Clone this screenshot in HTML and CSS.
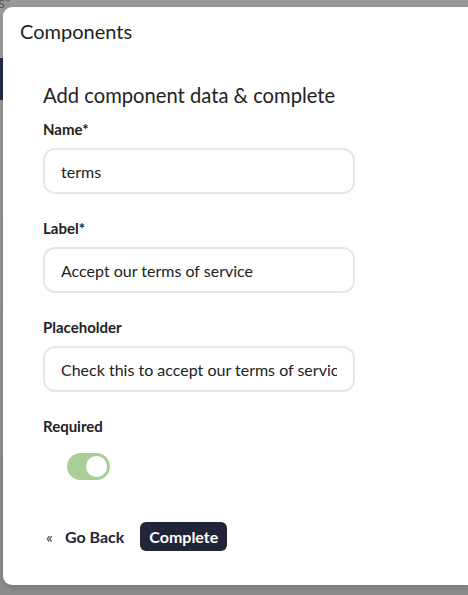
FILE: index.html
```html
<!DOCTYPE html>
<html>
<head>
<meta charset="utf-8">
<link rel="stylesheet" href="styles.css">
</head>
<body>
<div class="backdrop">
  <span class="behind-text">s*</span>
  <div class="modal">
    <h1 class="modal-title">Components</h1>
    <div class="modal-body">
      <h2 class="section-title">Add component data &amp; complete</h2>
      <div class="field">
        <label class="field-label">Name*</label>
        <input class="input" type="text" value="terms" readonly>
      </div>
      <div class="field">
        <label class="field-label">Label*</label>
        <input class="input" type="text" value="Accept our terms of service" readonly>
      </div>
      <div class="field">
        <label class="field-label">Placeholder</label>
        <input class="input" type="text" value="Check this to accept our terms of service" readonly>
      </div>
      <div class="field">
        <label class="field-label">Required</label>
        <div class="toggle"><span class="knob"></span></div>
      </div>
      <div class="actions">
        <button class="back-btn"><span class="chev">«</span>Go Back</button>
        <button class="complete-btn">Complete</button>
      </div>
    </div>
  </div>
</div>
</body>
</html>
```
FILE: styles.css
```css
* { box-sizing: border-box; }
html, body { margin: 0; padding: 0; }
body {
  width: 468px;
  height: 595px;
  overflow: hidden;
  font-family: Lato, "Noto Sans", sans-serif;
  background: #8c8c8c;
}
.backdrop {
  position: relative;
  width: 468px;
  height: 595px;
  padding: 7px 0 0 3px;
  background:
    linear-gradient(#9e9e9e, #9e9e9e) 0 0 / 3px 58px no-repeat,
    linear-gradient(#252a45, #252a45) 0 58px / 3px 42px no-repeat,
    linear-gradient(#999, #8a8a8a);
}
.behind-text {
  position: absolute;
  left: -2px;
  top: -8px;
  font-size: 16px;
  color: #555;
}
.modal {
  position: relative;
  background: #fff;
  height: 578px;
  border-radius: 9px 0 0 9px;
  box-shadow: 0 2px 6px rgba(0,0,0,0.15);
  color: #222;
}
.modal-title {
  margin: 0;
  padding: 12px 0 0 17px;
  font-size: 20px;
  font-weight: 400;
  line-height: 24px;
  color: #222;
}
.modal-body {
  padding: 0 0 0 40px;
}
.section-title {
  margin: 0;
  padding-top: 40px;
  font-size: 20.2px;
  font-weight: 400;
  line-height: 24px;
  color: #222;
}
.field {
  display: flex;
  flex-direction: column;
  margin-top: 13px;
}
.field + .field { margin-top: 25px; }
.field-label {
  font-size: 15px;
  font-weight: 700;
  line-height: 18px;
  color: #222;
  margin-bottom: 10px;
}
.input {
  width: 312px;
  height: 46px;
  border: 2px solid #e6e6eb;
  border-radius: 12px;
  padding: 0 16px;
  font-family: Lato, "Noto Sans", sans-serif;
  font-size: 16px;
  color: #222;
  background: #fff;
  outline: none;
  margin: 0;
}
.toggle {
  margin: 8px 0 0 24px;
  width: 43px;
  height: 27px;
  border-radius: 14px;
  background: #a8cf98;
  position: relative;
}
.knob {
  position: absolute;
  right: 3px;
  top: 3px;
  width: 21px;
  height: 21px;
  border-radius: 50%;
  background: #fff;
}
.actions {
  display: flex;
  align-items: center;
  margin-top: 42px;
  gap: 16px;
}
.back-btn, .complete-btn {
  font-family: Lato, "Noto Sans", sans-serif;
  font-size: 16px;
  font-weight: 700;
  border: none;
  cursor: pointer;
}
.back-btn {
  background: none;
  color: #212537;
  padding: 0 0 0 3px;
  display: flex;
  align-items: center;
}
.chev {
  font-size: 16px;
  margin-right: 12px;
  font-weight: 400;
}
.complete-btn {
  background: #212537;
  color: #fff;
  border-radius: 6px;
  height: 29px;
  padding: 0 9px;
}
```
